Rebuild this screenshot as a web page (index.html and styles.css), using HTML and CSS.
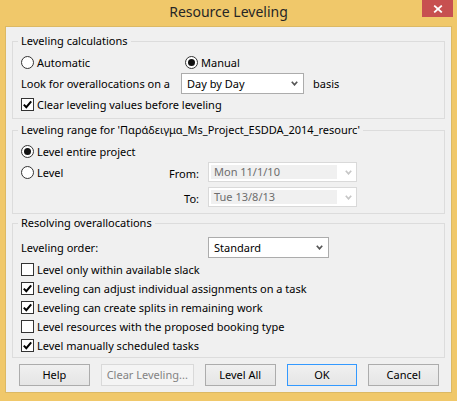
FILE: index.html
```html
<!DOCTYPE html>
<html>
<head>
<meta charset="utf-8">
<link rel="stylesheet" href="styles.css">
</head>
<body>
<div class="window">
  <div class="titlebar">
    <span></span>
    <div class="title">Resource Leveling</div>
    <div class="close-wrap">
      <div class="close"><svg width="10" height="8" viewBox="0 0 10 8"><path d="M1.2 0.6L8.8 7.4M8.8 0.6L1.2 7.4" stroke="#fff" stroke-width="1.8"/></svg></div>
    </div>
  </div>
  <div class="client">
    <section class="group g1">
      <div class="gtitle">Leveling calculations</div>
      <div class="row">
        <label class="opt w164"><span class="radio"></span>Automatic</label>
        <label class="opt"><span class="radio on"></span>Manual</label>
      </div>
      <div class="row">
        <span class="lbl w160">Look for overallocations on a</span>
        <div class="select s1"><span>Day by Day</span><svg class="chev" width="7" height="5" viewBox="0 0 7 5"><polyline points="0.8,0.8 3.5,3.8 6.2,0.8" fill="none" stroke="#555" stroke-width="1.7"/></svg></div>
        <span class="basis">basis</span>
      </div>
      <div class="row">
        <label class="opt"><span class="check"><svg width="11" height="11" viewBox="0 0 11 11"><polyline points="1.8,5.6 4.3,8.2 9.2,2.4" fill="none" stroke="#000" stroke-width="2"/></svg></span>Clear leveling values before leveling</label>
      </div>
    </section>

    <section class="group g2">
      <div class="gtitle">Leveling range for 'Παράδειγμα_Ms_Project_ESDDA_2014_resourc'</div>
      <div class="row r20">
        <label class="opt"><span class="radio on"></span>Level entire project</label>
      </div>
      <div class="range">
        <label class="opt"><span class="radio"></span>Level</label>
        <span class="rlbl">From:</span>
        <div class="datebox"><span class="field">Mon 11/1/10</span><svg class="chev" width="7" height="5" viewBox="0 0 7 5"><polyline points="0.8,0.8 3.5,3.8 6.2,0.8" fill="none" stroke="#c6c6c6" stroke-width="1.7"/></svg></div>
        <span></span>
        <span class="rlbl">To:</span>
        <div class="datebox"><span class="field">Tue 13/8/13</span><svg class="chev" width="7" height="5" viewBox="0 0 7 5"><polyline points="0.8,0.8 3.5,3.8 6.2,0.8" fill="none" stroke="#c6c6c6" stroke-width="1.7"/></svg></div>
      </div>
    </section>

    <section class="group g3">
      <div class="gtitle">Resolving overallocations</div>
      <div class="row">
        <span class="lbl w187">Leveling order:</span>
        <div class="select s2"><span>Standard</span><svg class="chev" width="7" height="5" viewBox="0 0 7 5"><polyline points="0.8,0.8 3.5,3.8 6.2,0.8" fill="none" stroke="#555" stroke-width="1.7"/></svg></div>
      </div>
      <div class="checks">
        <label class="opt crow"><span class="check"></span>Level only within available slack</label>
        <label class="opt crow"><span class="check"><svg width="11" height="11" viewBox="0 0 11 11"><polyline points="1.8,5.6 4.3,8.2 9.2,2.4" fill="none" stroke="#000" stroke-width="2"/></svg></span>Leveling can adjust individual assignments on a task</label>
        <label class="opt crow"><span class="check"><svg width="11" height="11" viewBox="0 0 11 11"><polyline points="1.8,5.6 4.3,8.2 9.2,2.4" fill="none" stroke="#000" stroke-width="2"/></svg></span>Leveling can create splits in remaining work</label>
        <label class="opt crow"><span class="check"></span>Level resources with the proposed booking type</label>
        <label class="opt crow"><span class="check"><svg width="11" height="11" viewBox="0 0 11 11"><polyline points="1.8,5.6 4.3,8.2 9.2,2.4" fill="none" stroke="#000" stroke-width="2"/></svg></span>Level manually scheduled tasks</label>
      </div>
    </section>

    <div class="buttons">
      <button class="btn">Help</button>
      <button class="btn wide disabled">Clear Leveling...</button>
      <button class="btn">Level All</button>
      <button class="btn default">OK</button>
      <button class="btn">Cancel</button>
    </div>
  </div>
</div>
</body>
</html>
```

FILE: styles.css
```css
* { box-sizing: border-box; }
html, body { margin: 0; padding: 0; }
body {
  width: 457px;
  height: 401px;
  overflow: hidden;
  font-family: "Noto Sans", "DejaVu Sans", sans-serif;
  font-size: 11px;
  color: #000;
}
.window {
  width: 457px;
  height: 401px;
  background: #f0c86a;
  display: flex;
  flex-direction: column;
}
.titlebar {
  height: 26px;
  flex: 0 0 26px;
  display: grid;
  grid-template-columns: 1fr auto 1fr;
}
.title {
  font-size: 14px;
  line-height: 24px;
  color: #262626;
  text-align: center;
  white-space: nowrap;
}
.close-wrap {
  display: flex;
  justify-content: flex-end;
  align-items: flex-start;
  padding-right: 4px;
}
.close {
  width: 31px;
  height: 17px;
  background: #c75050;
  display: flex;
  align-items: center;
  justify-content: center;
}
.client {
  flex: 1;
  margin: 0 5px 8px 5px;
  background: #f0f0f0;
  border: 1px solid #dcb964;
  padding: 0 6px;
  display: flex;
  flex-direction: column;
}
.group {
  border: 1px solid #dcdcdc;
  padding: 0 8px;
}
.gtitle {
  width: fit-content;
  margin: -9px 0 0 -3px;
  padding: 0 3px;
  line-height: 16px;
  height: 16px;
  background: #f0f0f0;
  white-space: nowrap;
}
.g1 { margin-top: 14px; padding-top: 0; padding-bottom: 3px; }
.g1 .gtitle { margin-bottom: 3px; }
.g2 { margin-top: 11px; padding-bottom: 6px; }
.g2 .gtitle { margin-bottom: 3px; }
.g3 { margin-top: 9px; padding-bottom: 2px; }
.g3 .gtitle { margin-bottom: 6px; }
.row {
  display: flex;
  align-items: center;
  height: 21px;
}
.r20 { height: 20px; }
.opt {
  display: flex;
  align-items: center;
  white-space: nowrap;
}
.w164 { width: 164px; flex: 0 0 164px; }
.w160 { width: 160px; flex: 0 0 160px; }
.w187 { width: 187px; flex: 0 0 187px; }
.lbl { white-space: nowrap; }
.radio {
  width: 13px;
  height: 13px;
  border: 1px solid #333;
  border-radius: 50%;
  background: #fff;
  margin-right: 3px;
  display: inline-flex;
  align-items: center;
  justify-content: center;
  flex: 0 0 13px;
}
.radio.on::after {
  content: "";
  width: 7px;
  height: 7px;
  border-radius: 50%;
  background: #111;
}
.check {
  width: 13px;
  height: 13px;
  border: 1px solid #333;
  background: #fff;
  margin-right: 3px;
  display: inline-flex;
  flex: 0 0 13px;
}
.check svg { display: block; }
.select {
  height: 21px;
  border: 1px solid #acacac;
  background: #fff;
  display: flex;
  align-items: center;
  justify-content: space-between;
  padding: 0 5px 0 5px;
  flex: 0 0 auto;
}
.s1 { width: 123px; }
.s2 { width: 121px; }
.chev { display: block; }
.basis { margin-left: 9px; }
.range {
  margin-top: 1px;
  display: grid;
  grid-template-columns: 60px 127px 149px;
  grid-auto-rows: 20px;
  row-gap: 5px;
  align-items: center;
}
.rlbl {
  text-align: right;
  padding-right: 9px;
  padding-top: 2px;
}
.datebox {
  height: 20px;
  border: 1px solid #d9d9d9;
  background: #fff;
  display: flex;
  align-items: center;
  padding: 0 4px 0 2px;
}
.datebox .field {
  width: 126px;
  height: 14px;
  line-height: 14px;
  background: #f0f0f0;
  color: #6d6d6d;
  padding-left: 3px;
  white-space: nowrap;
  margin-right: 8px;
}
.checks {
  margin-top: 2px;
  display: flex;
  flex-direction: column;
}
.crow { height: 19px; }
.buttons {
  margin: 6px 6px 0 7px;
  display: flex;
  gap: 11px;
}
.btn {
  width: 73px;
  height: 22px;
  border: 1px solid #acacac;
  background: linear-gradient(#f0f0f0, #e5e5e5);
  font-family: "Noto Sans", "DejaVu Sans", sans-serif;
  font-size: 11px;
  color: #000;
  padding: 0;
  line-height: 18px;
}
.btn.wide { width: 96px; }
.btn.disabled {
  border-color: #d9d9d9;
  background: #f4f4f4;
  color: #838383;
}
.btn.default { border-color: #3399ff; }
```
